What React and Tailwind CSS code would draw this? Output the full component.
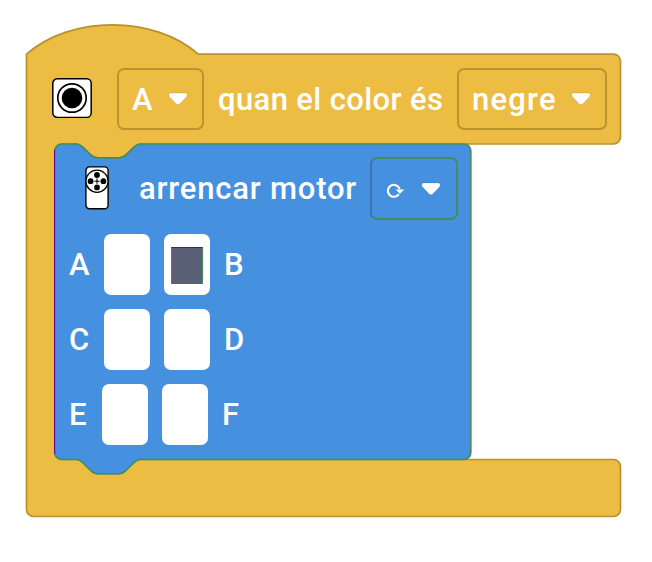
import React from "react";

function Outline() {
  return (
    <svg className="absolute inset-0" width="652" height="562" viewBox="0 0 652 562" fill="none">
      <path
        d="M26.5 54.2c44.8-39.2 127-39.2 171.8 0H613.5a7 7 0 0 1 7 7V137a7 7 0 0 1-7 7H140.6c-3.6 0-5.4 1.8-7.2 3.6l-7.1 7.1c-1.8 1.8-3.6 3.1-7.2 3.1H97.6c-3.6 0-5.4-1.3-7.2-3.1l-7.1-7.1c-1.8-1.8-3.6-3.6-7.2-3.6H61.8a7 7 0 0 0-7 7V452.5a7 7 0 0 0 7 7H613.5a7 7 0 0 1 7 7V509.5a7 7 0 0 1-7 7H33.5a7 7 0 0 1-7-7Z"
        fill="#ecbd42"
        stroke="#b8922f"
        strokeWidth="1.7"
      />
      <path
        d="M54.8 151a7 7 0 0 1 7-7h14.3c3.6 0 5.4 1.8 7.2 3.6l7.1 7.1c1.8 1.8 3.6 3.1 7.2 3.1h21.5c3.6 0 5.4-1.3 7.2-3.1l7.1-7.1c1.8-1.8 3.6-3.6 7.2-3.6H463.8a7 7 0 0 1 7 7V452.5a7 7 0 0 1-7 7H140.6c-3.6 0-5.4 1.8-7.2 3.6l-7.1 7.1c-1.8 1.8-3.6 3.6-7.2 3.6H97.6c-3.6 0-5.4-1.8-7.2-3.6l-7.1-7.1c-1.8-1.8-3.6-3.6-7.2-3.6H61.8a7 7 0 0 1-7-7Z"
        fill="#4590df"
        stroke="#468b63"
        strokeWidth="1.7"
      />
      <path d="M54.5 150V454" stroke="#6b0b91" />
    </svg>
  );
}

function Arrow() {
  return (
    <svg className="shrink-0" width="22" height="16" viewBox="0 0 22 16">
      <path
        d="M3.8 2h14.4c2.1 0 2.6 2.5 1.2 4l-6.6 6.9c-1 1.1-2.6 1.1-3.6 0L2.6 6C1.2 4.5 1.7 2 3.8 2Z"
        fill="#fff"
        stroke="#000"
        strokeOpacity=".12"
        strokeWidth="1"
      />
    </svg>
  );
}

function ColorSensor() {
  return (
    <svg className="mb-0.5 shrink-0" width="40" height="40" viewBox="0 0 40 40">
      <rect x=".8" y=".8" width="38.4" height="38.6" rx="4.5" fill="#fff" stroke="#000" strokeWidth="1.5" />
      <circle cx="20" cy="20" r="14.2" fill="#fff" stroke="#000" strokeWidth="1.7" />
      <circle cx="20" cy="20" r="10.3" />
    </svg>
  );
}

function Motor() {
  return (
    <svg className="mb-0.5 shrink-0" width="24" height="44" viewBox="0 0 24 44">
      <rect x=".9" y=".9" width="22.2" height="41.8" rx="3.5" fill="#fff" stroke="#000" strokeWidth="1.4" />
      <circle cx="12" cy="15.2" r="11.1" fill="#fff" stroke="#000" strokeWidth="1.3" />
      <circle cx="12" cy="9" r="2.9" />
      <circle cx="12" cy="21.4" r="2.9" />
      <circle cx="5.6" cy="15.2" r="2.9" />
      <circle cx="18.4" cy="15.2" r="2.9" />
      <path d="M12 12.6v5.2M9.4 15.2h5.2" stroke="#000" strokeWidth="1.1" />
    </svg>
  );
}

function PortRow({ left, right, active, narrow }) {
  return (
    <div className="flex h-[61px] items-center">
      <span className={narrow ? "w-[33px]" : "w-[35px]"}>{left}</span>
      <span className="h-[61px] w-[46px] rounded-[7px] bg-white" />
      <span className="ml-3.5 flex h-[61px] w-[46px] items-center justify-center rounded-[7px] bg-white">
        {active && (
          <span className="mt-px h-[37px] w-8 border-x border-t border-x-[#498b58] border-t-[#5a1091] bg-[#595f75]" />
        )}
      </span>
      <span className="ml-3.5">{right}</span>
    </div>
  );
}

export default function App() {
  return (
    <div className="relative h-[562px] w-[652px] overflow-hidden bg-white font-['Roboto',sans-serif] text-[31px] leading-none font-medium text-white">
      <Outline />
      <main className="relative flex flex-col pt-[68px]">
        <header className="flex h-[62px] items-center pl-[52px]">
          <ColorSensor />
          <div className="ml-[25px] flex h-[62px] w-[87px] items-center rounded-[7px] border-2 border-[#ba942f] pl-[13px]">
            <span className="w-[35px]">A</span>
            <Arrow />
          </div>
          <span className="ml-[14px] w-[239px] whitespace-nowrap tracking-[0.38px]">quan el color és</span>
          <div className="flex h-[62px] w-[150px] items-center rounded-[7px] border-2 border-[#ba942f] pl-[13px]">
            <span className="w-[98px] tracking-[1.2px]">negre</span>
            <Arrow />
          </div>
        </header>
        <section className="pt-[27px]">
          <div className="flex h-[63px] items-center pl-[85px]">
            <Motor />
            <span className="ml-[30px] w-[231px] whitespace-nowrap tracking-[0.8px]">arrencar motor</span>
            <div className="flex h-[63px] w-[88px] items-center rounded-[7px] border-2 border-[#468b63] border-l-[#3b73ad] pl-[13px]">
              <svg className="mt-1 mr-[15px]" width="20" height="18" viewBox="0 0 20 18">
                <path d="M13.9 12.1A6 6 0 1 1 14.6 7" fill="none" stroke="#fff" strokeWidth="2.1" />
                <path d="M10.6 7.4h8.7l-4.3 4.4Z" fill="#fff" />
              </svg>
              <Arrow />
            </div>
          </div>
          <div className="flex flex-col gap-3.5 pt-3.5 pl-[69px]">
            <PortRow left="A" right="B" active />
            <PortRow left="C" right="D" />
            <PortRow left="E" right="F" narrow />
          </div>
        </section>
      </main>
    </div>
  );
}
